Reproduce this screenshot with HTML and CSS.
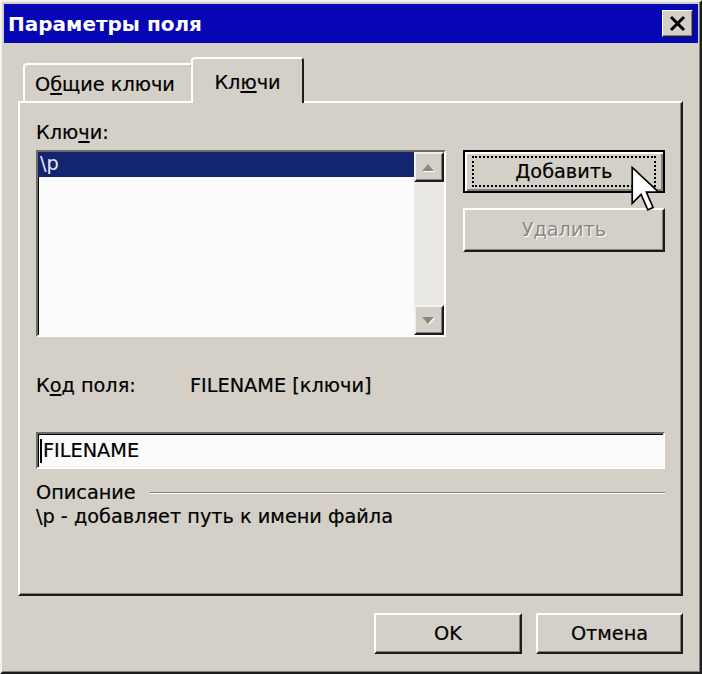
FILE: index.html
```html
<!DOCTYPE html>
<html lang="ru">
<head>
    <meta charset="UTF-8">
    <title>Параметры поля</title>
    <link rel="stylesheet" href="styles.css">
</head>
<body>
    <div class="window">
        <div class="titlebar">
            <span class="title">Параметры поля</span>
            <button class="close-btn" aria-label="Закрыть">
                <svg width="31" height="27" viewBox="0 0 31 27">
                    <path d="M9 7 L22 20 M22 7 L9 20" stroke="#000" stroke-width="3" fill="none"/>
                </svg>
            </button>
        </div>

        <div class="content">
            <div class="tabs">
                <div class="tab">О<u>б</u>щие ключи</div>
                <div class="tab active">Кл<u>ю</u>чи</div>
            </div>

            <div class="panel">
                <div class="label">Клю<u>ч</u>и:</div>

                <div class="keys-row">
                    <div class="listbox">
                        <div class="list-items">
                            <div class="list-item selected">\p</div>
                        </div>
                        <div class="scrollbar">
                            <div class="sb-btn">
                                <svg width="16" height="9" viewBox="0 0 16 9">
                                    <polygon points="2,9 8,2 14,9" fill="#fff"/>
                                    <polygon points="1,8 7,1 13,8" fill="#8a8884"/>
                                </svg>
                            </div>
                            <div class="sb-track"></div>
                            <div class="sb-btn">
                                <svg width="16" height="9" viewBox="0 0 16 9">
                                    <polygon points="2,2 14,2 8,9" fill="#fff"/>
                                    <polygon points="1,1 13,1 7,8" fill="#8a8884"/>
                                </svg>
                            </div>
                        </div>
                    </div>

                    <div class="side-buttons">
                        <button class="btn default"><span class="focus">Добавить</span></button>
                        <button class="btn btn-remove" disabled>Удалить</button>
                        <svg class="cursor" width="30" height="46" viewBox="0 0 12.5 19">
                            <polygon points="0.5,0.5 0.5,15.5 4.2,11.8 7,18.2 9.2,17.2 6.4,10.8 11.5,10.8"
                                     fill="#fff" stroke="#000" stroke-width="0.7" stroke-linejoin="miter"/>
                        </svg>
                    </div>
                </div>

                <div class="code-row">
                    <span class="code-label">К<u>о</u>д поля:</span>
                    <span class="code-value">FILENAME [ключи]</span>
                </div>

                <div class="textbox"><span class="caret"></span>FILENAME</div>

                <div class="group">
                    <span>Описание</span>
                    <span class="groove"></span>
                </div>
                <div class="desc">\p - добавляет путь к имени файла</div>
            </div>

            <div class="dialog-buttons">
                <button class="btn btn-ok">OK</button>
                <button class="btn btn-cancel">Отмена</button>
            </div>
        </div>
    </div>
</body>
</html>
```

FILE: styles.css
```css
:root {
    --face: #d4d0c8;
    --light: #ffffff;
    --shadow: #808080;
    --dark: #1c1c1c;
    --title: #0606b4;
    --select: #13256f;
}

* {
    box-sizing: border-box;
}

body {
    margin: 0;
    background: var(--face);
    font-family: 'DejaVu Sans', 'Liberation Sans', sans-serif;
    font-size: 19.3px;
    line-height: 24px;
    color: #000;
    -webkit-text-stroke: 0.2px #000;
}

u {
    text-decoration-thickness: 2px;
    text-underline-offset: 2px;
}

.window {
    width: 702px;
    height: 674px;
    padding: 2px;
    border: 2px solid;
    border-color: #f4f2ee var(--dark) var(--dark) #f4f2ee;
    box-shadow: inset -1px -1px 0 var(--shadow);
    display: flex;
    flex-direction: column;
}

/* заголовок окна */
.titlebar {
    height: 39px;
    background: var(--title);
    display: flex;
    align-items: center;
    justify-content: space-between;
    padding: 0 5px 0 4px;
}

.title {
    color: #fff;
    font-weight: bold;
    font-size: 20px;
    -webkit-text-stroke: 0;
}

.close-btn {
    width: 31px;
    height: 27px;
    padding: 0;
    background: var(--face);
    border: 1px solid;
    border-color: #fff var(--dark) var(--dark) #fff;
    box-shadow: inset -1px -1px 0 var(--shadow);
    display: flex;
}

.close-btn svg {
    margin: -1px;
}

.content {
    flex: 1;
    padding: 14px 15px 0 14px;
}

/* вкладки */
.tabs {
    display: flex;
    align-items: flex-end;
    height: 44px;
    padding-left: 5px;
}

.tab {
    height: 38px;
    width: 170px;
    padding: 8px 0 0 10px;
    border: 2px solid;
    border-bottom: none;
    border-color: #fff var(--dark) transparent #fff;
    border-radius: 4px 4px 0 0;
    background: var(--face);
}

.tab.active {
    position: relative;
    z-index: 1;
    width: 113px;
    height: 46px;
    margin: 0 0 -2px -2px;
    padding: 12px 0 0;
    text-align: center;
}

.panel {
    height: 495px;
    border: 2px solid;
    border-color: #fff var(--dark) var(--dark) #fff;
    box-shadow: inset -1px -1px 0 var(--shadow);
    padding: 18px 16px 0;
}

.keys-row {
    display: flex;
    gap: 17px;
    margin-top: 5px;
}

/* список ключей */
.listbox {
    width: 411px;
    height: 187px;
    display: flex;
    background: #fbfbfb;
    border: 2px solid;
    border-color: #6a6a6a #fff #fff #6a6a6a;
    box-shadow: inset 1px 1px 0 #000;
}

.list-items {
    flex: 1;
}

.list-item {
    height: 25px;
    padding-left: 2px;
}

.list-item.selected {
    background: var(--select);
    color: #e8e8f0;
    -webkit-text-stroke: 0;
}

.scrollbar {
    width: 30px;
    display: flex;
    flex-direction: column;
}

.sb-btn {
    height: 30px;
    background: var(--face);
    border: 2px solid;
    border-color: #f2f0ec var(--dark) var(--dark) #f2f0ec;
    box-shadow: inset -1px -1px 0 var(--shadow);
    display: flex;
    align-items: center;
    justify-content: center;
}

.sb-track {
    flex: 1;
    background: #ebe9e5;
}

/* кнопки */
.btn {
    font: inherit;
    color: #000;
    background: var(--face);
    border: 2px solid;
    border-color: #fff var(--dark) var(--dark) #fff;
    box-shadow: inset -1px -1px 0 var(--shadow);
    padding: 0;
}

.side-buttons {
    position: relative;
    width: 203px;
    display: flex;
    flex-direction: column;
    gap: 15px;
}

.btn.default {
    height: 43px;
    border-color: #000;
    box-shadow: inset 2px 2px 0 #fff, inset -2px -2px 0 var(--shadow);
    padding: 4px 7px;
}

.focus {
    display: flex;
    align-items: center;
    justify-content: center;
    height: 100%;
    border: 2px dotted #000;
}

.btn-remove {
    height: 44px;
    color: #8a8884;
    -webkit-text-stroke: 0;
    text-shadow: 1px 1px 0 #fff;
}

.cursor {
    position: absolute;
    left: 168px;
    top: 16px;
}

.code-row {
    display: flex;
    margin-top: 37px;
}

.code-label {
    width: 154px;
}

.textbox {
    margin-top: 34px;
    height: 37px;
    display: flex;
    align-items: center;
    padding-left: 2px;
    background: #fbfbfb;
    border: 2px solid;
    border-color: #6a6a6a #fff #fff #6a6a6a;
    box-shadow: inset 1px 1px 0 #000;
}

.caret {
    width: 2px;
    height: 24px;
    background: #000;
    margin-right: 1px;
}

.group {
    display: flex;
    align-items: center;
    gap: 14px;
    margin-top: 12px;
}

.groove {
    flex: 1;
    height: 2px;
    border-top: 1px solid var(--shadow);
    border-bottom: 1px solid #fff;
}

.dialog-buttons {
    display: flex;
    justify-content: flex-end;
    gap: 14px;
    margin-top: 17px;
}

.btn-ok {
    width: 148px;
    height: 41px;
}

.btn-cancel {
    width: 147px;
    height: 41px;
}
```
